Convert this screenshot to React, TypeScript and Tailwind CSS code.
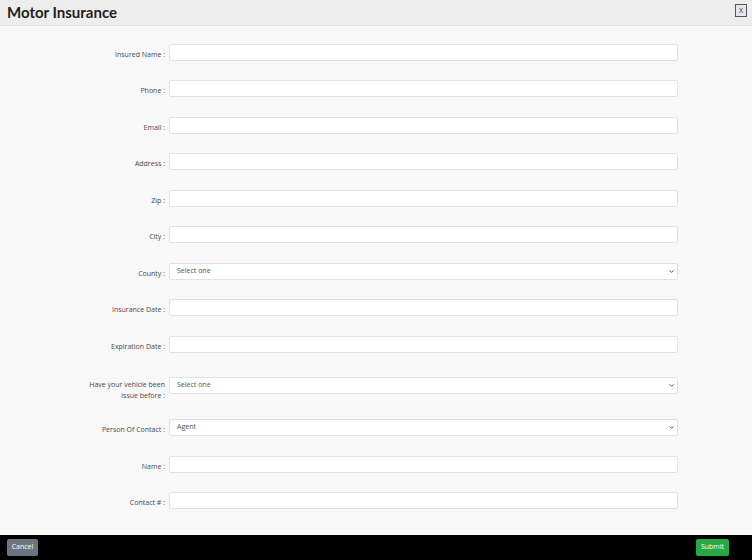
import { ChevronDown } from "lucide-react";

type Field = {
  label: string;
  kind?: "text" | "select";
  value?: string;
  twoLine?: [string, string];
};

const FIELDS: Field[] = [
  { label: "Insured Name :" },
  { label: "Phone :" },
  { label: "Email :" },
  { label: "Address :" },
  { label: "Zip :" },
  { label: "City :" },
  { label: "County :", kind: "select", value: "Select one" },
  { label: "Insurance Date :" },
  { label: "Expiration Date :" },
  {
    label: "Have your vehicle been issue before :",
    kind: "select",
    value: "Select one",
    twoLine: ["Have your vehicle been", "issue before :"],
  },
  { label: "Person Of Contact :", kind: "select", value: "Agent" },
  { label: "Name :" },
  { label: "Contact # :" },
];

function Row({ field }: { field: Field }) {
  return (
    <div className={`flex items-start mb-[19.5px] ${field.twoLine ? "pt-[4.5px]" : ""}`}>
      <div className="w-[169px] shrink-0 pr-[4px] text-right text-[7px] text-[#4a4a4a]">
        {field.twoLine ? (
          <div className="leading-[11.5px] translate-y-[1.5px]">
            <div>{field.twoLine[0]}</div>
            <div>{field.twoLine[1]}</div>
          </div>
        ) : (
          <div className="h-[17px] leading-[17px] translate-y-[2px]">{field.label}</div>
        )}
      </div>
      {field.kind === "select" ? (
        <div className="w-[509px] h-[17px] bg-white border border-[#e2e2e2] rounded-[2px] flex items-center justify-between pl-[7px] pr-[2px] text-[7px] text-[#555]">
          <span>{field.value}</span>
          <ChevronDown size={7} strokeWidth={3} className="text-[#444]" />
        </div>
      ) : (
        <div className="w-[509px] h-[17px] bg-white border border-[#e2e2e2] rounded-[2px]" />
      )}
    </div>
  );
}

export default function App() {
  return (
    <div
      className="w-[752px] h-[560px] flex flex-col bg-[#f8f8f8]"
      style={{ fontFamily: '"Open Sans", "Noto Sans", sans-serif' }}
    >
      {/* Header */}
      <div className="h-[26px] shrink-0 bg-[#ededed] border-b border-[#e4e4e4] flex items-center justify-between pl-[7px] pr-[5px]">
        <h1
          className="text-[15px] font-bold text-[#222] leading-none"
          style={{ fontFamily: "Lato, sans-serif" }}
        >
          Motor Insurance
        </h1>
        <button className="w-[12px] h-[13px] mt-[-5px] border border-[#555] bg-[#e6e6e6] text-[7px] leading-none text-[#333] flex items-center justify-center">
          X
        </button>
      </div>

      {/* Form */}
      <div className="flex-1 min-h-0 pt-[17.5px]">
        {FIELDS.map((f) => (
          <Row key={f.label} field={f} />
        ))}
      </div>

      {/* Footer */}
      <div className="h-[25px] shrink-0 bg-black flex items-center justify-between pl-[7px] pr-[23px]">
        <button className="w-[31px] h-[17px] bg-[#6c757d] rounded-[2px] text-[7px] text-white">Cancel</button>
        <button className="w-[33px] h-[17px] bg-[#28a745] rounded-[2px] text-[7px] text-white">Submit</button>
      </div>
    </div>
  );
}
